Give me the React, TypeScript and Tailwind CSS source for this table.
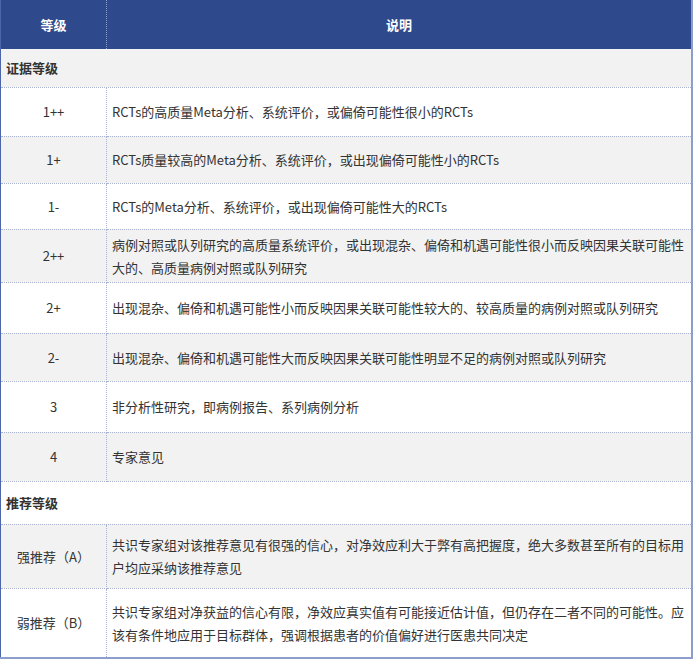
import React from 'react';

type Row = { level: string; desc: React.ReactNode; h: string; gray?: boolean };

const evidence: Row[] = [
  { level: '1++', desc: 'RCTs的高质量Meta分析、系统评价，或偏倚可能性很小的RCTs', h: 'h-[49px]' },
  { level: '1+', desc: 'RCTs质量较高的Meta分析、系统评价，或出现偏倚可能性小的RCTs', h: 'h-[47px]', gray: true },
  { level: '1-', desc: 'RCTs的Meta分析、系统评价，或出现偏倚可能性大的RCTs', h: 'h-[46px]' },
  {
    level: '2++',
    desc: (
      <>
        病例对照或队列研究的高质量系统评价，或出现混杂、偏倚和机遇可能性很小而反映因果关联可能性
        <br />
        大的、高质量病例对照或队列研究
      </>
    ),
    h: 'h-[53px]',
    gray: true,
  },
  { level: '2+', desc: '出现混杂、偏倚和机遇可能性小而反映因果关联可能性较大的、较高质量的病例对照或队列研究', h: 'h-[51px]' },
  { level: '2-', desc: '出现混杂、偏倚和机遇可能性大而反映因果关联可能性明显不足的病例对照或队列研究', h: 'h-[48px]', gray: true },
  { level: '3', desc: '非分析性研究，即病例报告、系列病例分析', h: 'h-[51px]' },
  { level: '4', desc: '专家意见', h: 'h-[49px]', gray: true },
];

const recommend: Row[] = [
  {
    level: '强推荐（A）',
    desc: (
      <>
        共识专家组对该推荐意见有很强的信心，对净效应利大于弊有高把握度，绝大多数甚至所有的目标用
        <br />
        户均应采纳该推荐意见
      </>
    ),
    h: 'h-[64px]',
    gray: true,
  },
  {
    level: '弱推荐（B）',
    desc: (
      <>
        共识专家组对净获益的信心有限，净效应真实值有可能接近估计值，但仍存在二者不同的可能性。应
        <br />
        该有条件地应用于目标群体，强调根据患者的价值偏好进行医患共同决定
      </>
    ),
    h: 'h-[70px]',
  },
];

function DataRow({ row, last }: { row: Row; last?: boolean }) {
  const bg = row.gray ? 'bg-[#f2f2f2]' : 'bg-white';
  const line = last ? '' : 'border-b border-dotted border-[#aab3d0]';
  return (
    <tr className={`${row.h} ${bg}`}>
      <td className={`${line} border-r border-dotted border-r-[#aab3d0] text-center align-middle`}>{row.level}</td>
      <td className={`${line} pl-[5px] pr-[2px] align-middle whitespace-nowrap`}>{row.desc}</td>
    </tr>
  );
}

function SectionRow({ title, h, gray }: { title: string; h: string; gray?: boolean }) {
  return (
    <tr className={`${h} ${gray ? 'bg-[#f2f2f2]' : 'bg-white'}`}>
      <td colSpan={2} className="border-b border-dotted border-[#aab3d0] pl-[5px] align-middle font-bold">
        {title}
      </td>
    </tr>
  );
}

export default function App() {
  return (
    <div
      className="w-[693px] h-[662px] bg-white text-[13px] leading-[23px] text-[#333333]"
      style={{ fontFamily: '"Noto Sans CJK SC", "Noto Sans", sans-serif' }}
    >
      <table className="w-[693px] table-fixed border-collapse border-l border-l-[#4d66aa] border-r-2 border-r-[#8c9ecb] border-b-2 border-b-[#8c9ecb]">
        <colgroup>
          <col className="w-[106px]" />
          <col />
        </colgroup>
        <thead>
          <tr className="h-[49px] bg-[#2e4a8c] text-white font-bold">
            <th className="border-r border-dotted border-r-[#8fa0cc] text-center align-middle">等级</th>
            <th className="text-center align-middle">说明</th>
          </tr>
        </thead>
        <tbody>
          <SectionRow title="证据等级" h="h-[38px]" gray />
          {evidence.map((r) => (
            <DataRow key={r.level} row={r} />
          ))}
          <SectionRow title="推荐等级" h="h-[43px]" />
          {recommend.map((r, i) => (
            <DataRow key={r.level} row={r} last={i === recommend.length - 1} />
          ))}
        </tbody>
      </table>
    </div>
  );
}
